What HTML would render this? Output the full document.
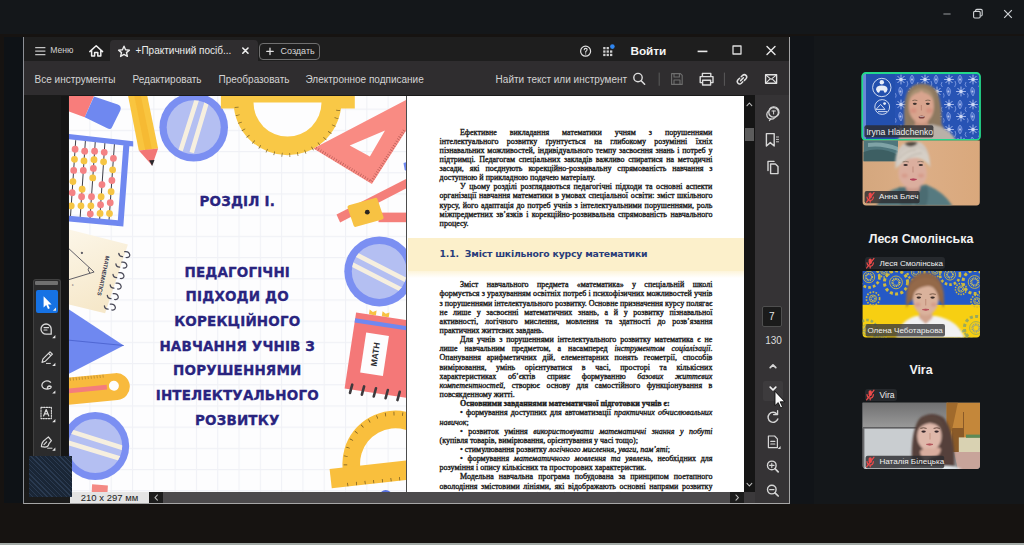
<!DOCTYPE html>
<html lang="uk">
<head>
<meta charset="utf-8">
<title>Screen share</title>
<style>
*{box-sizing:border-box;margin:0;padding:0}
html,body{width:1024px;height:545px;overflow:hidden;background:#161311}
body{position:relative;font-family:"Liberation Sans","DejaVu Sans",sans-serif;color:#e6e6e6}
.a{position:absolute}
#topband{left:0;top:0;width:1024px;height:34px;background:#14171a}
#leftstrip{left:4px;top:37px;width:20px;height:466px;background:#0e1216}
#rightpanel{left:790px;top:36px;width:234px;height:468px;background:#14171a}
#rightgap{left:790px;top:36px;width:24px;height:468px;background:#111418}
#bottomline{left:0;top:543px;width:1024px;height:2px;background:#a3aaa6}
/* acrobat window */
#win{left:23px;top:37px;width:767px;height:467px;background:#1b1b1b;border-left:1px solid #8d9096;border-bottom:1px solid #a6a6a6;border-right:1px solid #a4a4a4;overflow:hidden}
#tabbar{left:0;top:0;width:766px;height:24px;background:#1e1e1e}
#acttab{left:86px;top:3px;width:148px;height:22px;background:#2f2d2f;border-radius:4px 4px 0 0}
#toolbar{left:0;top:24px;width:766px;height:34px;background:#2f2d2f}
#doc{left:0;top:58px;width:733px;height:397px;background:#1a1a1a}
#page1{left:44.5px;top:1px;width:337.5px;height:396px;background:#fdfdfe;overflow:hidden}
#page2{left:384px;top:1px;width:336px;height:396px;background:#fff;overflow:hidden}
#vscroll{left:720px;top:58px;width:11.4px;height:397px;background:#151515}
#rpane{left:731.4px;top:58px;width:34.6px;height:408px;background:#353335}
#hscroll{left:124px;top:455px;width:607.4px;height:11px;background:linear-gradient(90deg,#4c4a4c 0,#4c4a4c 596px,#3b393b 596px)}
#sizelabel{left:46px;top:455px;width:79px;height:11px;background:#e4e4e4;color:#222;font-size:9.5px;line-height:11px;text-align:center;white-space:nowrap}
.ttl{left:0;width:337.5px;text-align:center;font-family:"DejaVu Sans","Liberation Sans",sans-serif;font-weight:bold;font-size:13.5px;line-height:24px;color:#29247f;white-space:nowrap;letter-spacing:0.15px;-webkit-text-stroke:0.3px #29247f}
.txt{left:31.6px;width:272.8px;font-family:"Liberation Serif","DejaVu Serif",serif;font-size:8px;color:#1a1a1a;-webkit-text-stroke:0.35px #1a1a1a}
.txt p{white-space:nowrap;text-align:justify;text-align-last:justify;height:inherit;overflow:visible}
.txt p.i{padding-left:20.4px}
.txt p.l{text-align:left;text-align-last:left}
.ztitle{width:118px;text-align:center;font-weight:bold;font-size:12.4px;line-height:16px;color:#f2f2f2;white-space:nowrap}
.zl{font-size:8.6px;line-height:12px;color:#f0f0f0;white-space:nowrap}
.tb{font-size:10px;color:#d4d4d4;white-space:nowrap;line-height:14px}
</style>
</head>
<body>
<div class="a" id="topband"></div>
<div class="a" id="leftstrip"></div>
<div class="a" id="rightpanel"></div>
<div class="a" id="rightgap"></div>
<div class="a" id="bottomline"></div>

<div class="a" id="win">
  <div class="a" id="tabbar"></div>
  <div class="a" id="acttab"></div>
  <div class="a" id="toolbar"></div>
  <div class="a" id="doc">
    <div class="a" id="page1"><svg class="a" style="left:0;top:0" width="337.5" height="396" viewBox="68.5 96 337.5 396">
<defs>
<pattern id="grid" x="174.1" y="172.2" width="21.3" height="21.2" patternUnits="userSpaceOnUse"><path d="M0.5 0V21.2M0 0.5H21.3" stroke="#f0f1f6" stroke-width="1.2" fill="none"/></pattern>
<clipPath id="m1"><circle cx="193.2" cy="127.3" r="27"/></clipPath>
<clipPath id="m2"><circle cx="378.8" cy="271.4" r="27.5"/></clipPath>
<clipPath id="m3"><circle cx="94.7" cy="446" r="27"/></clipPath>
</defs>
<rect x="68.5" y="96" width="337.5" height="396" fill="#fdfdfe"/>
<rect x="68.5" y="96" width="337.5" height="396" fill="url(#grid)"/>
<!-- eraser -->
<path d="M68.5 96H93.5L84.2 117.2L68.5 111.6Z" fill="#f87d7b"/>
<path d="M93.5 96.4L117.3 104.6Q121.4 106.4 119.8 110.4L111.4 127.4Q109.8 130 106.8 128.2L84.2 117.2Z" fill="#6f88f0"/>
<!-- abacus -->
<g transform="translate(132.7,141) rotate(4)">
<path d="M-57.4 3.2L-57.3 83.1M-47.7 2.5L-47.6 82.5M-37.8 1.8L-37.7 81.8M-28.1 1.1L-28.0 81.1M-18.5 0.4L-18.6 80.4M-67.0 3.8L-66.9 83.8" stroke="#2f2f38" stroke-width="0.9" fill="none"/>
<g fill="#f48284"><circle cx="-57.4" cy="12.3" r="3.4"/><circle cx="-57.3" cy="33.5" r="3.4"/><circle cx="-57.3" cy="55.8" r="3.4"/><circle cx="-47.7" cy="13.6" r="3.4"/><circle cx="-47.7" cy="32.9" r="3.4"/><circle cx="-47.6" cy="59.2" r="3.4"/><circle cx="-37.8" cy="12.9" r="3.4"/><circle cx="-37.8" cy="30.1" r="3.4"/><circle cx="-37.7" cy="58.5" r="3.4"/><circle cx="-37.7" cy="75.7" r="3.4"/><circle cx="-28.1" cy="13.3" r="3.4"/><circle cx="-28.1" cy="45.7" r="3.4"/><circle cx="-28.1" cy="65.9" r="3.4"/><circle cx="-18.5" cy="18.7" r="3.4"/><circle cx="-18.5" cy="40.9" r="3.4"/><circle cx="-18.6" cy="63.2" r="3.4"/><circle cx="-67.0" cy="12.5" r="3.4"/><circle cx="-67.0" cy="33.6" r="3.4"/><circle cx="-67.0" cy="55.9" r="3.4"/></g>
<g fill="#f6c544"><circle cx="-57.3" cy="22.4" r="3.4"/><circle cx="-57.3" cy="44.7" r="3.4"/><circle cx="-57.3" cy="69.0" r="3.4"/><circle cx="-47.7" cy="23.3" r="3.4"/><circle cx="-47.6" cy="51.7" r="3.4"/><circle cx="-47.6" cy="68.3" r="3.4"/><circle cx="-37.8" cy="21.4" r="3.4"/><circle cx="-37.8" cy="39.7" r="3.4"/><circle cx="-37.7" cy="67.6" r="3.4"/><circle cx="-28.1" cy="22.8" r="3.4"/><circle cx="-28.1" cy="57.8" r="3.4"/><circle cx="-28.0" cy="74.6" r="3.4"/><circle cx="-18.5" cy="30.2" r="3.4"/><circle cx="-18.5" cy="52.1" r="3.4"/><circle cx="-18.6" cy="74.0" r="3.4"/><circle cx="-67.0" cy="22.7" r="3.4"/><circle cx="-67.0" cy="44.9" r="3.4"/><circle cx="-66.9" cy="69.2" r="3.4"/></g>
<path d="M-69.1 -2.7L-0.0 0.2L0.4 5.4L-68.7 2.5ZM-9.6 4.9L-3.5 5.3L-3.9 85.9L-9.8 85.5ZM-63.3 78.9L-4.3 80.3L-3.9 86.1L-63.0 84.6Z" fill="#7088f0"/>
</g>
<!-- pencil -->
<path d="M127.6 96H146.8L157.6 148.6L138.3 150.6Z" fill="#f9c53f"/>
<path d="M133.8 96H140.4L151.4 149.2L144.7 149.9Z" fill="#f6ba33"/>
<path d="M138.3 150.6L157.6 148.6L151.6 165.6Z" fill="#f27676"/>
<path d="M148.6 160.2L154 160L151.6 166Z" fill="#2a2a2e"/>
<!-- magnifier 1 -->
<circle cx="193.2" cy="127.3" r="34.3" fill="#7b8ff2"/>
<circle cx="193.2" cy="127.3" r="27" fill="#b4bff2"/>
<g clip-path="url(#m1)" stroke="#f6efdf" stroke-width="4.6"><path d="M197.2 96.8L180.1 150.6M207.3 98.8L191.2 152.6"/></g>
<!-- protractor 1 -->
<path d="M220.4 96H354.3V108.6H340.5A54 54 0 0 1 233.5 108.6H220.4Z" fill="#f9c846"/>
<path d="M253 102.6H321A34 34 0 0 1 253 102.6Z" fill="#fdfdfe"/>
<path d="M236 104A51 51 0 0 0 338 104" fill="none" stroke="#7d6426" stroke-width="4" stroke-dasharray="0.7 7.2" stroke-dashoffset="-3"/>
<!-- triangle ruler -->
<path d="M312.9 148.5L435 84.7L371.4 183.9ZM349.2 145.5L384.5 130.4L369.4 156.6Z" fill="#f98b83" fill-rule="evenodd"/>
<path d="M315.5 148L370.6 181.3" fill="none" stroke="#b05752" stroke-width="3" stroke-dasharray="0.6 2"/>
<path d="M371 181.2L404.5 129" fill="none" stroke="#b05752" stroke-width="3" stroke-dasharray="0.6 2"/>
<!-- compass -->
<path d="M336 214.6L406 178.7V188.2L339.6 222.4Z" fill="#f47f7a"/>
<rect x="378" y="212.6" width="28" height="9.6" fill="#f47f7a"/>
<path d="M348.4 205.2L374.5 198Q376.4 197.4 377 199.3L383 217.1Q383.6 219 381.7 219.6L355.6 226.8Q353.7 227.4 353.1 225.5L347.1 207.7Q346.5 205.8 348.4 205.2Z" fill="#f7c243"/>
<circle cx="366.8" cy="212.2" r="2.4" fill="#2b2620"/>
<path d="M403 163L406 162V171L404.2 170Z" fill="#6f88f0"/>
<!-- magnifier 2 -->
<circle cx="378.8" cy="271.4" r="35" fill="#7b8ff2"/>
<circle cx="378.8" cy="271.4" r="27.5" fill="#b4bff2"/>
<g clip-path="url(#m2)" stroke="#f6efdf" stroke-width="4.6"><path d="M350 251.6L408 281.4M345 261.1L404 291.3"/></g>
<!-- notebook MATH -->
<g transform="translate(355.6,312.4) rotate(8.6)">
<path d="M13 0V-5L16.5 -3L20 -5V0ZM26 0V-5L29.5 -3L33 -5V0Z" fill="#f7c243"/>
<rect x="0" y="0" width="70" height="77" fill="#f47878"/>
<rect x="0" y="6" width="70" height="4.2" fill="#6f88f0"/>
<rect x="13" y="18.4" width="23" height="40.4" fill="#fdfdfe"/>
<text transform="translate(28.2,38.6) rotate(-90)" text-anchor="middle" font-family="Liberation Sans, sans-serif" font-weight="bold" font-size="8.6" fill="#2d2d33">MATH</text>
<g stroke="#3d3a3d" stroke-width="2.6" stroke-linecap="round"><path d="M7 72L6 80.5M19 72L18 80.5M31 72L30 80.5M43 72L42 80.5M55 72L54 80.5"/></g>
</g>
<!-- protractor 2 -->
<g transform="translate(394.9,463.6) rotate(-6.4)">
<path d="M-53 0A53 53 0 0 1 53 0H35.3A35.3 35.3 0 0 0 -35.3 0Z" fill="#f9bf3d"/>
<rect x="-66" y="-2" width="130" height="19.5" fill="#f9bf3d"/>
<path d="M-50 0A50 50 0 0 1 50 0" fill="none" stroke="#6e5520" stroke-width="3.6" stroke-dasharray="0.7 8" stroke-dashoffset="-4"/>
<path d="M-50 15.5H60" fill="none" stroke="#6e5520" stroke-width="3.4" stroke-dasharray="0.7 8"/>
</g>
<path d="M380.5 492Q385 488 390 492Z" fill="#5872e0"/>
<!-- notepad -->
<linearGradient id="npg" x1="0" y1="0" x2="0.3" y2="1"><stop offset="0" stop-color="#fcf6e8"/><stop offset="1" stop-color="#f6e8ca"/></linearGradient>
<path d="M68.5 229.4L127.4 244.6L104.6 313.2L68.5 304.6Z" fill="url(#npg)"/>
<g fill="none" stroke="#4a4a58" stroke-width="1.25" stroke-linecap="round"><path d="M118.3 253.4Q118.5 256.4 122.0 256.7M124.2 251.6Q128.6 251.0 129.3 255.0Q129.1 257.8 125.7 257.5"/><path d="M115.4 263.9Q115.6 266.9 119.1 267.2M121.3 262.1Q125.7 261.5 126.4 265.5Q126.2 268.3 122.8 268.0"/><path d="M112.5 274.4Q112.7 277.4 116.2 277.7M118.4 272.6Q122.8 272.0 123.5 276.0Q123.3 278.8 119.9 278.5"/><path d="M109.7 284.9Q109.9 287.9 113.4 288.2M115.6 283.1Q120.0 282.5 120.7 286.5Q120.5 289.3 117.1 289.0"/><path d="M106.8 295.4Q107.0 298.4 110.5 298.7M112.7 293.6Q117.1 293.0 117.8 297.0Q117.6 299.8 114.2 299.5"/><path d="M103.9 305.9Q104.1 308.9 107.6 309.2M109.8 304.1Q114.2 303.5 114.9 307.5Q114.7 310.3 111.3 310.0"/></g>
<g fill="none" stroke="#3b3b4a" stroke-width="0.8"><path d="M68.5 248.8L93.6 272L68.5 279.6M88.6 267.4L87.6 269.8L89.4 273.2"/><circle cx="81.4" cy="252.9" r="0.7" fill="#3b3b4a"/></g>
<text x="71.4" y="285.6" font-family="Liberation Sans, sans-serif" font-size="3.6" fill="#3b3b4a">c</text>
<text transform="translate(105.2,255.6) rotate(102)" font-family="Liberation Sans, sans-serif" font-size="5.6" font-weight="bold" fill="#34344a" letter-spacing="0">MATHEMATICS</text>
<!-- blue triangle -->
<path d="M68.5 309.4L123.2 345.5L68.5 373.8Z" fill="#6f88f0"/>
<path d="M68.5 340.2L123.2 345.5" stroke="#4c63cf" stroke-width="0.9" fill="none"/>
<!-- ruler -->
<g transform="translate(68.5,391) rotate(-5.4)">
<rect x="-30" y="-13.4" width="91" height="27" rx="13.5" fill="#f8ba3d"/>
<rect x="-30" y="-2.6" width="68" height="4.8" fill="#f47c7c"/>
<circle cx="45.2" cy="-1" r="5" fill="#fdfdfe"/>
<path d="M2 -11.6H36" stroke="#a2792a" stroke-width="3" stroke-dasharray="0.6 2.4" fill="none"/>
</g>
<!-- magnifier 3 -->
<circle cx="94.7" cy="446" r="34" fill="#7b8ff2"/>
<circle cx="94.7" cy="446" r="27" fill="#b4bff2"/>
<g clip-path="url(#m3)" stroke="#f6efdf" stroke-width="4.6"><path d="M62 428.9L125 448.8M61 440.7L121 459"/></g>
<path d="M91.6 484.2L107.4 485.6L107 492H91.2Z" fill="#f48a84"/>
</svg>
<div class="a ttl" style="top:93px">РОЗДІЛ І.</div>
<div class="a ttl" style="top:163.5px">ПЕДАГОГІЧНІ</div>
<div class="a ttl" style="top:188.2px">ПІДХОДИ ДО</div>
<div class="a ttl" style="top:212.9px">КОРЕКЦІЙНОГО</div>
<div class="a ttl" style="top:237.6px">НАВЧАННЯ УЧНІВ З</div>
<div class="a ttl" style="top:262.3px">ПОРУШЕННЯМИ</div>
<div class="a ttl" style="top:287.0px">ІНТЕЛЕКТУАЛЬНОГО</div>
<div class="a ttl" style="top:311.7px">РОЗВИТКУ</div>
</div>
    <div class="a" style="left:382px;top:1px;width:1.2px;height:396px;background:#4c4c4c"></div><div class="a" style="left:383.2px;top:1px;width:1px;height:396px;background:#fff"></div>
    <div class="a" id="page2"><div class="a" style="left:0;top:142.4px;width:336px;height:32.2px;background:#fcf0cb"></div>
<div class="a" style="left:0;top:174.6px;width:336px;height:7px;background:linear-gradient(#fdf4da,#ffffff)"></div>
<div class="a" style="left:31.6px;top:152.4px;font-family:'DejaVu Sans','Liberation Sans',sans-serif;font-weight:bold;font-size:9.3px;line-height:12px;color:#283c7a;white-space:pre;letter-spacing:-0.2px">1.1.  Зміст шкільного курсу математики</div>
<div class="a txt" style="top:31.5px;line-height:9.14px">
<p class="i">Ефективне викладання математики учням з порушеннями</p>
<p>інтелектуального розвитку ґрунтується на глибокому розумінні їхніх</p>
<p>пізнавальних можливостей, індивідуального темпу засвоєння знань і потреб у</p>
<p>підтримці. Педагогам спеціальних закладів важливо спиратися на методичні</p>
<p>засади, які поєднують корекційно-розвивальну спрямованість навчання з</p>
<p class="l">доступною й прикладною подачею матеріалу.</p>
<p class="i">У цьому розділі розглядаються педагогічні підходи та основні аспекти</p>
<p>організації навчання математики в умовах спеціальної освіти: зміст шкільного</p>
<p>курсу, його адаптація до потреб учнів з інтелектуальними порушеннями, роль</p>
<p>міжпредметних зв’язків і корекційно-розвивальна спрямованість навчального</p>
<p class="l">процесу.</p>
</div>
<div class="a txt" style="top:184.2px;line-height:9.15px">
<p class="i">Зміст навчального предмета «математика» у спеціальній школі</p>
<p>формується з урахуванням освітніх потреб і психофізичних можливостей учнів</p>
<p>з порушеннями інтелектуального розвитку. Основне призначення курсу полягає</p>
<p>не лише у засвоєнні математичних знань, а й у розвитку пізнавальної</p>
<p>активності, логічного мислення, мовлення та здатності до розв’язання</p>
<p class="l">практичних життєвих завдань.</p>
<p class="i">Для учнів з порушеннями інтелектуального розвитку математика є не</p>
<p>лише навчальним предметом, а насамперед <i>інструментом соціалізації</i>.</p>
<p>Опанування арифметичних дій, елементарних понять геометрії, способів</p>
<p>вимірювання, умінь орієнтуватися в часі, просторі та кількісних</p>
<p>характеристиках об’єктів сприяє формуванню <i>базових життєвих</i></p>
<p><i>компетентностей</i>, створює основу для самостійного функціонування в</p>
<p class="l">повсякденному житті.</p>
<p class="l" style="padding-left:20.4px"><b>Основними завданнями математичної підготовки учнів є:</b></p>
<p class="i">• формування доступних для автоматизації <i>практичних обчислювальних</i></p>
<p class="l"><i>навичок</i>;</p>
<p class="i">• розвиток уміння <i>використовувати математичні знання у побуті</i></p>
<p class="l">(купівля товарів, вимірювання, орієнтування у часі тощо);</p>
<p class="l" style="padding-left:20.4px">• стимулювання розвитку <i>логічного мислення, уваги, пам’яті</i>;</p>
<p class="i">• формування <i>математичного мовлення та уявлень</i>, необхідних для</p>
<p class="l">розуміння і опису кількісних та просторових характеристик.</p>
<p class="i">Модельна навчальна програма побудована за принципом поетапного</p>
<p>оволодіння змістовими лініями, які відображають основні напрями розвитку</p>
<p>математичних знань та вмінь учнів: числа та дії з ними, величини та їх</p>
</div>
</div>
  </div>
  <div class="a" id="vscroll"></div>
  <div class="a" id="rpane"></div>
  <div class="a" id="hscroll"></div>
  <div class="a" id="sizelabel">210 x 297 мм</div>
  <div class="a tb" style="left:26.3px;top:8px;font-size:8.6px;line-height:11px;color:#d2d2d2">Меню</div>
<div class="a tb" style="left:111.6px;top:6.6px;color:#ececec">+Практичний посіб...</div>
<div class="a" style="left:235px;top:5.7px;width:60.6px;height:17px;border:1px solid #707070;border-radius:4px"></div>
<div class="a tb" style="left:256.5px;top:8.2px;font-size:9px;line-height:12px;color:#d8d8d8">Создать</div>
<div class="a tb" style="left:606.6px;top:6.5px;font-size:11.8px;font-weight:bold;color:#f4f4f4;letter-spacing:-0.1px">Войти</div>
<div class="a tb" style="left:10.6px;top:35.5px">Все инструменты</div>
<div class="a tb" style="left:108.5px;top:35.5px">Редактировать</div>
<div class="a tb" style="left:194.5px;top:35.5px">Преобразовать</div>
<div class="a tb" style="left:281.5px;top:35.5px">Электронное подписание</div>
<div class="a tb" style="left:471.6px;top:35.5px">Найти текст или инструмент</div>
<div class="a" style="left:721px;top:90.6px;width:9.4px;height:13.8px;background:#5c5c5c"></div>
<div class="a" style="left:125px;top:455px;width:14.4px;height:11px;background:#1c1c1c"></div>
<div class="a" style="left:706px;top:455px;width:14px;height:11px;background:#1c1c1c"></div>
<div class="a" style="left:737.6px;top:269px;width:20.4px;height:21.4px;background:#1b1b1b;border:1px solid #4f4f4f;border-radius:2px;color:#e8e8e8;font-size:10px;line-height:19px;text-align:center">7</div>
<div class="a tb" style="left:734px;top:296.6px;width:31px;text-align:center;font-size:10px;color:#dcdcdc">130</div>
<div class="a" style="left:739px;top:343.6px;width:20px;height:20.6px;background:#3d3b3d;border-radius:2px"></div>
<svg class="a" style="left:0;top:0" width="766" height="466" viewBox="24 37 766 466" fill="none" stroke="#d6d6d6" stroke-width="1.3" stroke-linecap="round" stroke-linejoin="round">
<!-- hamburger -->
<path d="M35.2 47.6H45.4M35.2 51.1H45.4M35.2 54.6H45.4" stroke="#c4c4c4" stroke-width="1.4" stroke-linecap="butt"/>
<!-- home -->
<path d="M89.8 51.6L96.2 45.8L102.6 51.6M91.6 50.6V56H94.6V52.6H97.8V56H100.8V50.6" stroke="#f0f0f0" stroke-width="1.5"/>
<!-- star -->
<path d="M124 46.2L125.55 49.75L129.4 50.1L126.5 52.65L127.4 56.4L124 54.4L120.6 56.4L121.5 52.65L118.6 50.1L122.45 49.75Z" stroke="#ececec" stroke-width="1.4"/>
<!-- tab close -->
<path d="M242.8 48L248 53.2M248 48L242.8 53.2" stroke="#f0f0f0" stroke-width="1.6"/>
<!-- plus -->
<path d="M266.8 51.4H273.2M270 48.2V54.6" stroke="#e0e0e0" stroke-width="1.3"/>
<!-- help -->
<circle cx="585.6" cy="51.2" r="5" stroke="#e0e0e0" stroke-width="1.2"/>
<path d="M584.2 49.8Q584.2 48.4 585.7 48.4Q587.2 48.4 587.1 49.8Q587 50.8 585.7 51.4V52.3M585.7 53.9V54" stroke="#e0e0e0" stroke-width="1.1"/>
<!-- apps grid -->
<g fill="#cfcfcf" stroke="none"><rect x="603.2" y="47" width="2.3" height="2.3"/><rect x="606.6" y="47" width="2.3" height="2.3"/><rect x="603.2" y="50.4" width="2.3" height="2.3"/><rect x="606.6" y="50.4" width="2.3" height="2.3"/><rect x="610" y="50.4" width="2.3" height="2.3"/><rect x="603.2" y="53.8" width="2.3" height="2.3"/><rect x="606.6" y="53.8" width="2.3" height="2.3"/><rect x="610" y="53.8" width="2.3" height="2.3"/></g>
<circle cx="612.4" cy="46.6" r="2.3" fill="#2f86f0" stroke="none"/>
<!-- window controls -->
<path d="M697.6 51.4H707.4" stroke="#eaeaea" stroke-width="1.6" stroke-linecap="butt"/>
<rect x="733" y="46" width="8" height="8" stroke="#dedede" stroke-width="1.3"/>
<path d="M767 46.6L775 54.6M775 46.6L767 54.6" stroke="#eaeaea" stroke-width="1.4"/>
<!-- search -->
<circle cx="638" cy="77.6" r="4.2" stroke="#dcdcdc" stroke-width="1.4"/><path d="M641.2 80.8L644.6 84.2" stroke="#dcdcdc" stroke-width="1.6"/>
<path d="M659.2 73V85.4M724.4 73V85.4" stroke="#5a5a5a" stroke-width="1"/>
<!-- save (dim) -->
<path d="M671.6 73.6H680.4L682.2 75.4V84.4H671.6ZM674 73.8V77H679.4V73.8M674 84.2V80H680V84.2" stroke="#6e6e6e" stroke-width="1.1"/>
<!-- print -->
<path d="M702.4 76.4V73.4H710.8V76.4M702.4 82.6H700.2V76.6H713V82.6H710.8M702.6 80.2H710.6V85H702.6Z" stroke="#dcdcdc" stroke-width="1.4"/>
<!-- link -->
<path d="M740.6 80.6L743.4 77.8M739.6 78.2L738 79.8Q736.4 81.6 738 83.2Q739.6 84.8 741.4 83.2L742.8 81.8M741.2 76.8L742.6 75.4Q744.4 73.8 746 75.4Q747.6 77 746 78.8L744.4 80.4" stroke="#e2e2e2" stroke-width="1.5"/>
<!-- mail -->
<rect x="765.6" y="74.8" width="11" height="8.4" stroke="#e2e2e2" stroke-width="1.4"/><path d="M766 75.2L771.1 79.4L776.2 75.2M766 82.8L769.6 79.4M776.2 82.8L772.6 79.4" stroke="#e2e2e2" stroke-width="1.1"/>
<!-- vscroll arrows -->
<path d="M747 105.6L749.4 103L751.8 105.6" stroke="#bdbdbd" stroke-width="1.1"/>
<path d="M747 483.4L749.4 486L751.8 483.4" stroke="#bdbdbd" stroke-width="1.1"/>
<path d="M157.4 495L155 497.6L157.4 500.2M736 495L738.4 497.6L736 500.2" stroke="#bdbdbd" stroke-width="1.1"/>
<!-- right pane icons -->
<circle cx="771.4" cy="114.6" r="4.6"/><path d="M776.4 116.6A5.2 5.2 0 1 0 769.4 109.4M770.8 118.8L769.4 120.6" stroke-width="1.2"/><circle cx="773.6" cy="112.4" r="4.8" fill="#353335"/><path d="M772 111H775.4M773.6 111V114" stroke-width="1"/>
<path d="M766.4 133.6H774.2V146L770.3 142.6L766.4 146Z" stroke-width="1.4"/><path d="M776.4 137H778.6M776.4 139.4H778.6M776.4 141.8H778.6" stroke-width="0.9"/>
<path d="M768 170.6V161.4H774M770.6 164H775.4L778 166.6V173.6H770.6Z" stroke-width="1.4"/>
<!-- up/down chevrons -->
<path d="M770.2 367.6L773 364.8L775.8 367.6" stroke-width="1.7"/>
<path d="M770.2 387.2L773 390L775.8 387.2" stroke-width="1.7" stroke="#f2f2f2"/>
<!-- rotate -->
<path d="M777 414.2A5 5 0 1 0 777.8 419" stroke-width="1.4"/><path d="M777.6 410.6V414.6H773.6" stroke-width="1.3"/>
<!-- page fit -->
<path d="M768.4 436H774.6L777.4 438.8V447.6H768.4ZM770.8 441.4H774.8M770.8 444H774.8" stroke-width="1.2"/><path d="M780.6 446V449H777.6Z" fill="#d6d6d6" stroke="none"/>
<!-- zoom in / out -->
<circle cx="771.8" cy="465.4" r="4.3" stroke-width="1.4"/><path d="M775 468.6L778.2 471.8" stroke-width="1.7"/><path d="M769.6 465.4H774M771.8 463.2V467.6" stroke-width="1.1"/>
<circle cx="771.8" cy="489.6" r="4.3" stroke-width="1.4"/><path d="M775 492.8L778.2 496" stroke-width="1.7"/><path d="M769.6 489.6H774" stroke-width="1.1"/>
<!-- mouse cursor -->
<path d="M775 391.6V405.6L778.2 402.6L780.6 408L782.6 407.1L780.2 401.8H784.6Z" fill="#fafafa" stroke="#111" stroke-width="0.9" stroke-linejoin="miter"/>
</svg>

</div>
<div class="a" style="left:60.9px;top:96px;width:7.6px;height:396px;background:#151515"></div>
<div class="a" style="left:33px;top:279.4px;width:28px;height:178px;background:#2b2b2c;border:1px solid #414141;border-bottom:none;border-radius:3px 3px 0 0"></div>
<div class="a" style="left:35.2px;top:281.4px;width:23.2px;height:3.4px;background:#707070;border-radius:1px"></div>
<div class="a" style="left:35.6px;top:290px;width:22.8px;height:22.8px;background:#1672e4;border-radius:2px"></div>
<div class="a" style="left:29px;top:455.8px;width:42.6px;height:41.6px;background:repeating-linear-gradient(45deg,#1a2636 0,#1a2636 2.4px,#2a3a50 2.4px,#2a3a50 3.4px)"></div>
<svg class="a" style="left:26px;top:275px" width="50" height="190" viewBox="26 275 50 190" fill="none" stroke="#dadada" stroke-width="1.3" stroke-linecap="round" stroke-linejoin="round">
<path d="M43.6 296.2V307.4L46.2 305L48 309L49.8 308.2L48 304.4H51.6Z" fill="#fff" stroke="none"/>
<g fill="#e8e8e8" stroke="none"><path d="M56 307.6V310.8H52.8Z"/><path d="M55.4 335V338.2H52.2Z"/><path d="M55.4 362.8V366H52.2Z"/><path d="M55.4 390.4V393.6H52.2Z"/><path d="M55.4 419V422.2H52.2Z"/><path d="M55.4 447.6V450.8H52.2Z"/></g>
<path d="M51.2 329A5.1 5.1 0 1 0 46.2 334.2H51.2Z"/><path d="M44 327.6H48.6M44 330H47" stroke-width="1.1"/>
<path d="M42 362.4L43 358.8L50 351.8L52.4 354.2L45.4 361.2ZM48.6 353.4L50.8 355.6" stroke-width="1.2"/><path d="M46.4 363.4H50.4" stroke-width="1"/>
<path d="M50.6 382.2Q46.6 379.6 43.2 382.4Q40.4 385.6 43.6 388.2Q47 390 50.4 388.2Q52.4 386.4 49.6 386Q47.2 386.2 47.4 388.8" stroke-width="1.3"/>
<rect x="41" y="407.4" width="10.4" height="11.2" stroke-dasharray="1.4 1.2" stroke-width="1.1"/><path d="M43.6 416L46.2 409.6L48.8 416M44.6 413.8H47.8" stroke-width="1.2"/>
<path d="M41.4 446.6Q41.4 442 45.4 439.4L48.4 437L51.4 440.6L49 443.6Q48.4 447 44.8 447.2ZM44 444.6L46.6 441.8" stroke-width="1.2"/><path d="M47.6 448.2H52" stroke-width="1"/>
</svg>

<svg class="a" style="left:936px;top:4px" width="84" height="22" viewBox="936 4 84 22" fill="none" stroke="#d0d3d6" stroke-width="1.1">
<path d="M943.4 14H950.6" stroke="#8c9094"/><rect x="973.6" y="11.4" width="6.6" height="6.6" rx="1.2"/><path d="M975.6 11.2V10.6Q975.6 9.4 976.8 9.4H981Q982.2 9.4 982.2 10.6V14.8Q982.2 16 981 16H980.4"/><path d="M1004.2 10.2L1011.8 17.8M1011.8 10.2L1004.2 17.8" stroke-width="1.2"/>
</svg>
<div class="a ztitle" style="left:862px;top:230.5px">Леся Смолінська</div>
<div class="a ztitle" style="left:862px;top:362px">Vira</div>
<!-- video 1 -->
<svg class="a" style="left:861px;top:72px" width="120" height="69" viewBox="861 72 120 69">
<defs>
<clipPath id="v1c"><rect x="862.6" y="73.4" width="117" height="66" rx="3"/></clipPath>
<pattern id="flor" x="895" y="73" width="24" height="25" patternUnits="userSpaceOnUse">
<g stroke="#a3b6ea" stroke-width="1" fill="none"><path d="M6 1.6V11.4M1.1 6.5H10.9M2.5 3L9.5 10M9.5 3L2.5 10"/><path d="M18 13.6V23.4M13.1 18.5H22.9M14.5 15L21.5 22M21.5 15L14.5 22"/></g>
<g stroke="#7c97de" stroke-width="0.9" fill="#4a6fc8"><path d="M17 2Q21 6 17 11Q13 6 17 2ZM5 14Q9.6 17 6 23Q2 18 5 14Z"/><path d="M12 8Q14 11 11.6 14M23 9Q21 12 23.4 14M0 20Q2 22 0.6 24.6" fill="none"/></g>
<circle cx="6" cy="6.5" r="1.7" fill="#cfdaf6"/><circle cx="18" cy="18.5" r="1.7" fill="#cfdaf6"/><circle cx="17" cy="6.6" r="1" fill="#b6c6f0"/><circle cx="5.4" cy="18.6" r="1" fill="#b6c6f0"/>
</pattern>
<filter id="b0"><feGaussianBlur stdDeviation="0.35"/></filter><filter id="b1" x="-20%" y="-20%" width="140%" height="140%"><feGaussianBlur stdDeviation="0.9"/></filter>
</defs>
<g clip-path="url(#v1c)">
<rect x="862" y="73" width="119" height="67" fill="#2753b4"/>
<rect x="895" y="73" width="86" height="67" fill="url(#flor)" filter="url(#b0)"/>
<rect x="862" y="73" width="4" height="67" fill="#6b88d8"/>
<rect x="866" y="73" width="29" height="67" fill="#2350ae"/>
<g stroke="#dfe6f6" stroke-width="0.9" fill="none"><circle cx="881.8" cy="87.5" r="9.2"/><circle cx="882.2" cy="107" r="7.4"/><path d="M876 109.4L880.6 104.4L885 109.4ZM878 111.6H887"/></g>
<g fill="#e8edf8"><circle cx="881.8" cy="82.2" r="2.2"/><path d="M876 89.6Q876 85.6 881.8 85.6Q887.6 85.6 887.6 89.6Q886.4 93.6 884.4 92.6L883.4 90.6H880.2L879.2 92.6Q877.2 93.6 876 89.6Z"/><circle cx="884.6" cy="103.6" r="1.4"/></g>
<g filter="url(#b1)">
<path d="M901 140Q902 128 904.4 124Q903 100 908 91Q913 83.6 921.6 83.6Q931 83.6 936.6 91Q942 101 941.6 124Q946 130 948 140Z" fill="#8e7960"/>
<path d="M897.8 141Q901 129 912 126.4L933 124.6Q950 128 956.6 141Z" fill="#b9b1a8"/>
<path d="M915 118H928V127Q921.6 131 915 127Z" fill="#c6947e"/>
<ellipse cx="921.3" cy="106.2" rx="12.6" ry="17.2" fill="#d8a48e"/>
<path d="M908.4 103Q908.6 88.6 921.4 88Q934.2 88.6 934.4 103Q931 93.6 923.6 92.6L921.4 90.6L919.2 92.6Q911.6 93.6 908.4 103Z" fill="#a89072"/>
<ellipse cx="913.4" cy="110.6" rx="3.2" ry="2.6" fill="#d48a7a" fill-opacity="0.7"/><ellipse cx="929.2" cy="110.6" rx="3.2" ry="2.6" fill="#d48a7a" fill-opacity="0.7"/>
</g>
<g filter="url(#b0)">
<path d="M912.4 100.6Q914.8 99.6 917.4 100.6M925.4 100.6Q928 99.6 930.4 100.6" stroke="#7a6250" stroke-width="0.9" fill="none"/>
<ellipse cx="914.8" cy="103.8" rx="2" ry="1.1" fill="#3e302e"/><ellipse cx="927.8" cy="103.8" rx="2" ry="1.1" fill="#3e302e"/>
<path d="M921.4 105V110.4" stroke="#c08a76" stroke-width="1.2"/>
<ellipse cx="921.6" cy="117" rx="3" ry="1.5" fill="#7c4242"/><path d="M919.4 116.4H923.8" stroke="#e8dcd4" stroke-width="0.7"/>
</g>
<rect x="864.4" y="125.2" width="69" height="12.4" rx="2" fill="#2c2c30" fill-opacity="0.82"/>
</g>
<rect x="862.2" y="73" width="117.8" height="66.8" rx="3.6" fill="none" stroke="#23d88b" stroke-width="1.8"/>
</svg>
<div class="a zl" style="left:866.2px;top:125.6px">Iryna Hladchenko</div>
<!-- video 2 -->
<svg class="a" style="left:862px;top:140px" width="119" height="66" viewBox="862 140 119 66">
<defs><clipPath id="v2c"><path d="M862.6 140.4H979.8V202Q979.8 205.4 976.4 205.4H866Q862.6 205.4 862.6 202Z"/></clipPath>
<linearGradient id="wall2" x1="0" y1="0" x2="1" y2="0"><stop offset="0" stop-color="#d4a77e"/><stop offset="0.5" stop-color="#dcae86"/><stop offset="1" stop-color="#d9a87c"/></linearGradient></defs>
<g clip-path="url(#v2c)">
<rect x="862" y="140" width="119" height="66" fill="url(#wall2)"/>
<rect x="863.6" y="140" width="34.4" height="21.2" fill="#4f767c"/><path d="M863.6 152Q880 146 898 155V161.2H863.6Z" fill="#3d5f63"/><path d="M868 143Q884 141 898 147V151Q882 145 868 147Z" fill="#7fa3a6"/>
<g filter="url(#b1)">
<path d="M876 206Q884 191 899 187.4L926 184.6Q944 192 952.6 206Z" fill="#577a80"/>
<path d="M895.4 170Q894 150 903.4 144Q911.8 139.8 921.6 143Q930 149 930.4 168Q926 158 912.6 157Q899 158 895.4 170Z" fill="#cfc8c0"/>
<path d="M904.6 143.4Q911 140.4 917.6 142.6Q916 146.6 910.6 146.4Q906 146.4 904.6 143.4Z" fill="#50463e"/>
<path d="M906 184H920V192L913 197L906 192Z" fill="#c9998a"/>
<ellipse cx="912.6" cy="173.2" rx="14.2" ry="15.4" fill="#dbae9e"/>
<path d="M897 168Q898 152 908 149Q918 146 926.6 153Q929.6 158 929.6 166Q925 158.6 917 158Q906 156.6 897 168Z" fill="#d6cfc6"/>
<path d="M899 159Q906 150 916 149.6M903 163Q910 154 922 153" stroke="#b4aca2" stroke-width="0.8" fill="none"/>
<ellipse cx="904.6" cy="175.6" rx="3" ry="2.2" fill="#d4907e" fill-opacity="0.6"/><ellipse cx="921" cy="175.6" rx="3" ry="2.2" fill="#d4907e" fill-opacity="0.6"/>
<path d="M899 187Q896.6 196 901 206H912L913 197L905 188.6ZM927 186Q930 196 926 206H915L914 197L921 188Z" fill="#4c6c72"/>
</g>
<g filter="url(#b0)">
<path d="M902.6 162Q905.6 160.8 908.8 162M917.4 162Q920.6 160.8 923.6 162" stroke="#8a7464" stroke-width="0.9" fill="none"/>
<ellipse cx="905.6" cy="165" rx="2.2" ry="1.1" fill="#3c302e"/><ellipse cx="920.8" cy="165" rx="2.2" ry="1.1" fill="#3c302e"/>
<path d="M913 166.6V172.6" stroke="#c49080" stroke-width="1.2"/>
<path d="M910 179.4Q913.2 181.2 916.6 179.4Q913.2 178.2 910 179.4Z" fill="#b24058" stroke="#b24058" stroke-width="0.8"/>
</g>
<rect x="864.6" y="191" width="55" height="12.2" rx="2" fill="#2c2c30" fill-opacity="0.82"/>
</g>
</svg>
<div class="a zl" style="font-size:8.1px;left:879px;top:191.3px">Анна Блеч</div>
<!-- label 3 -->
<div class="a" style="left:864.6px;top:257.2px;width:80.4px;height:12px;background:#26292d;border-radius:3px"></div>
<div class="a zl" style="font-size:8.1px;left:879.4px;top:258px">Леся Смолінська</div>
<!-- video 3 -->
<svg class="a" style="left:862px;top:270px" width="119" height="68" viewBox="862 270 119 68">
<defs><clipPath id="v3c"><path d="M862.6 271H980V334Q980 337.4 976.6 337.4H866Q862.6 337.4 862.6 334Z"/></clipPath></defs>
<g clip-path="url(#v3c)">
<rect x="862" y="270" width="119" height="35" fill="#2559c6"/>
<rect x="862" y="304.8" width="119" height="34" fill="#f7cf12"/>
<g fill="none"><circle cx="896" cy="282.4" r="11.6" stroke="#cdb93e" stroke-width="3.0" stroke-dasharray="3.02 2.32"/><circle cx="896" cy="282.4" r="6.4" stroke="#cdb93e" stroke-width="0.9"/><circle cx="896" cy="282.4" r="3.5" stroke="#e2cc48" stroke-width="2.3" stroke-dasharray="0.8 0.7"/><circle cx="869" cy="277" r="10.4" stroke="#cdb93e" stroke-width="2.7" stroke-dasharray="2.70 2.08"/><circle cx="869" cy="277" r="5.7" stroke="#cdb93e" stroke-width="0.9"/><circle cx="869" cy="277" r="3.1" stroke="#e2cc48" stroke-width="2.1" stroke-dasharray="0.8 0.7"/><circle cx="873" cy="298.6" r="6.6" stroke="#cdb93e" stroke-width="1.7" stroke-dasharray="1.72 1.32"/><circle cx="873" cy="298.6" r="3.6" stroke="#cdb93e" stroke-width="0.9"/><circle cx="873" cy="298.6" r="2.0" stroke="#e2cc48" stroke-width="1.3" stroke-dasharray="0.8 0.7"/><circle cx="916" cy="272" r="8.6" stroke="#cdb93e" stroke-width="2.2" stroke-dasharray="2.24 1.72"/><circle cx="916" cy="272" r="4.7" stroke="#cdb93e" stroke-width="0.9"/><circle cx="916" cy="272" r="2.6" stroke="#e2cc48" stroke-width="1.7" stroke-dasharray="0.8 0.7"/><circle cx="884" cy="271" r="6" stroke="#cdb93e" stroke-width="1.6" stroke-dasharray="1.56 1.20"/><circle cx="884" cy="271" r="3.3" stroke="#cdb93e" stroke-width="0.9"/><circle cx="884" cy="271" r="1.8" stroke="#e2cc48" stroke-width="1.2" stroke-dasharray="0.8 0.7"/><circle cx="950" cy="274.6" r="10" stroke="#cdb93e" stroke-width="2.6" stroke-dasharray="2.60 2.00"/><circle cx="950" cy="274.6" r="5.5" stroke="#cdb93e" stroke-width="0.9"/><circle cx="950" cy="274.6" r="3.0" stroke="#e2cc48" stroke-width="2.0" stroke-dasharray="0.8 0.7"/><circle cx="974.6" cy="282" r="11.6" stroke="#cdb93e" stroke-width="3.0" stroke-dasharray="3.02 2.32"/><circle cx="974.6" cy="282" r="6.4" stroke="#cdb93e" stroke-width="0.9"/><circle cx="974.6" cy="282" r="3.5" stroke="#e2cc48" stroke-width="2.3" stroke-dasharray="0.8 0.7"/><circle cx="977" cy="301" r="6" stroke="#cdb93e" stroke-width="1.6" stroke-dasharray="1.56 1.20"/><circle cx="977" cy="301" r="3.3" stroke="#cdb93e" stroke-width="0.9"/><circle cx="977" cy="301" r="1.8" stroke="#e2cc48" stroke-width="1.2" stroke-dasharray="0.8 0.7"/><circle cx="961" cy="289" r="5.6" stroke="#cdb93e" stroke-width="1.5" stroke-dasharray="1.46 1.12"/><circle cx="961" cy="289" r="3.1" stroke="#cdb93e" stroke-width="0.9"/><circle cx="961" cy="289" r="1.7" stroke="#e2cc48" stroke-width="1.1" stroke-dasharray="0.8 0.7"/><circle cx="935" cy="271" r="6" stroke="#cdb93e" stroke-width="1.6" stroke-dasharray="1.56 1.20"/><circle cx="935" cy="271" r="3.3" stroke="#cdb93e" stroke-width="0.9"/><circle cx="935" cy="271" r="1.8" stroke="#e2cc48" stroke-width="1.2" stroke-dasharray="0.8 0.7"/></g><g fill="none"><circle cx="867" cy="330" r="10" stroke="#9aa95c" stroke-width="2.6" stroke-dasharray="2.60 2.00"/><circle cx="867" cy="330" r="5.5" stroke="#9aa95c" stroke-width="0.9"/><circle cx="867" cy="330" r="3.0" stroke="#7f98a0" stroke-width="2.0" stroke-dasharray="0.8 0.7"/><circle cx="976" cy="328" r="11.6" stroke="#9aa95c" stroke-width="3.0" stroke-dasharray="3.02 2.32"/><circle cx="976" cy="328" r="6.4" stroke="#9aa95c" stroke-width="0.9"/><circle cx="976" cy="328" r="3.5" stroke="#7f98a0" stroke-width="2.3" stroke-dasharray="0.8 0.7"/><circle cx="959" cy="338" r="7.6" stroke="#9aa95c" stroke-width="2.0" stroke-dasharray="1.98 1.52"/><circle cx="959" cy="338" r="4.2" stroke="#9aa95c" stroke-width="0.9"/><circle cx="959" cy="338" r="2.3" stroke="#7f98a0" stroke-width="1.5" stroke-dasharray="0.8 0.7"/><circle cx="880" cy="338" r="6" stroke="#9aa95c" stroke-width="1.6" stroke-dasharray="1.56 1.20"/><circle cx="880" cy="338" r="3.3" stroke="#9aa95c" stroke-width="0.9"/><circle cx="880" cy="338" r="1.8" stroke="#7f98a0" stroke-width="1.2" stroke-dasharray="0.8 0.7"/></g>
<g filter="url(#b1)">
<path d="M906.6 308Q903 274 925.6 272.6Q947 274 943.6 308Q940 296 925.6 296Q911 296 906.6 308Z" fill="#8d6546"/>
<path d="M896 338Q900 320 916 316L936 316Q958 320 964.6 338Z" fill="#f1f1f2"/>
<path d="M919 308H932.4V318L925.7 324L919 318Z" fill="#d2a48e"/>
<ellipse cx="925.7" cy="300" rx="12.8" ry="15.2" fill="#dab29c"/>
<path d="M908.6 300Q907 279 925.6 278Q944 279 942.6 300Q939 287 929 286Q916 286 908.6 300Z" fill="#94694a"/>
<ellipse cx="917.6" cy="304.6" rx="3" ry="2.2" fill="#d4907e" fill-opacity="0.6"/><ellipse cx="933.8" cy="304.6" rx="3" ry="2.2" fill="#d4907e" fill-opacity="0.6"/>
</g>
<g filter="url(#b0)">
<path d="M915.6 294.4Q918.6 293.2 921.8 294.4M929.6 294.4Q932.8 293.2 935.8 294.4" stroke="#6e5040" stroke-width="0.9" fill="none"/>
<ellipse cx="918.8" cy="297.6" rx="2.2" ry="1.1" fill="#3c2e2a"/><ellipse cx="932.6" cy="297.6" rx="2.2" ry="1.1" fill="#3c2e2a"/>
<path d="M925.7 299V305.4" stroke="#c4937e" stroke-width="1.2"/>
<path d="M922.4 309.6Q925.7 311.2 929 309.6Q925.7 308.6 922.4 309.6Z" fill="#b8505a" stroke="#b8505a" stroke-width="0.8"/>
</g>
<rect x="865.6" y="324" width="79.4" height="12.6" rx="2" fill="#3a3a3c" fill-opacity="0.8"/>
</g>
</svg>
<div class="a zl" style="font-size:8.1px;left:867.4px;top:324.5px">Олена Чеботарьова</div>
<!-- label 4 -->
<div class="a" style="left:864.6px;top:388.8px;width:32px;height:12.2px;background:#26292d;border-radius:3px"></div>
<div class="a zl" style="left:879.4px;top:389px">Vira</div>
<!-- video 4 -->
<svg class="a" style="left:862px;top:402px" width="119" height="68" viewBox="862 402 119 68">
<defs><clipPath id="v4c"><path d="M862.6 402.8H980V465.6Q980 469 976.6 469H866Q862.6 469 862.6 465.6Z"/></clipPath>
<linearGradient id="ceil" x1="0" y1="0" x2="0" y2="1"><stop offset="0" stop-color="#6f6f70"/><stop offset="1" stop-color="#9a9a9a"/></linearGradient></defs>
<g clip-path="url(#v4c)">
<rect x="862" y="402" width="119" height="68" fill="#8e8e8f"/>
<rect x="862" y="402" width="86" height="26" fill="url(#ceil)"/>
<rect x="864" y="428" width="52" height="42" fill="#c9cdd0"/><rect x="862" y="427" width="56" height="1.6" fill="#5e5e60"/><rect x="862" y="428" width="2.4" height="42" fill="#6a6a6c"/>
<path d="M946.6 402H981V452H952L946.6 440Z" fill="#c4873a"/><path d="M952 428H963V452H952Z" fill="#8a5a28"/><path d="M946.6 402L958 402L952 430L946.6 440Z" fill="#a06a2c"/><rect x="963" y="412" width="1" height="40" fill="#8a5a28"/>
<rect x="958.8" y="437.4" width="22.2" height="16" fill="#d9d2b2"/><rect x="966" y="434.6" width="15" height="3.2" fill="#5c8a58"/>
<path d="M954 452H981V470H958Z" fill="#c8a49a"/>
<g filter="url(#b1)">
<path d="M912 470Q910 430 920 418Q932 410 944 418Q956 434 954 470Z" fill="#54403a"/>
<ellipse cx="929.4" cy="436" rx="12.2" ry="15" fill="#dfb8aa"/>
<path d="M916.6 432Q918 415 932 415Q946 418 945 436Q941 424 930 423Q921 424 916.6 432Z" fill="#5a443c"/>

<path d="M920 451Q926 446 933 449Q939 446 941 449Q940 457 932 457L926 461Q920 457 920 451Z" fill="#d9ad9e"/>
<path d="M896 470Q902 464 914 466L946 466Q958 466 962 470Z" fill="#e8eef2"/>
</g>
<g filter="url(#b0)">
<path d="M920.4 428.4Q923.4 427.2 926.6 428.4M933.6 428.4Q936.8 427.2 939.8 428.4" stroke="#5a4036" stroke-width="0.9" fill="none"/>
<ellipse cx="923.6" cy="431.6" rx="2.2" ry="1.1" fill="#35282a"/><ellipse cx="936.6" cy="431.6" rx="2.2" ry="1.1" fill="#35282a"/>
<path d="M930 433V439.6" stroke="#c99a8a" stroke-width="1.2"/>
<path d="M926.4 444.4Q929.6 446 933 444.4Q929.6 443.2 926.4 444.4Z" fill="#b4545c" stroke="#b4545c" stroke-width="0.8"/>
</g>
<rect x="865.6" y="455.8" width="78.6" height="12.4" rx="2" fill="#2c2c30" fill-opacity="0.82"/>
</g>
</svg>
<div class="a zl" style="font-size:8.1px;left:879.4px;top:456.2px">Наталія Білецька</div>
<!-- muted mic icons -->
<svg class="a" style="left:862px;top:188px" width="22" height="284" viewBox="862 188 22 284" fill="none" stroke="#ee4a4a" stroke-width="1.2" stroke-linecap="round">
<g id="mic"><rect x="868.6" y="192.6" width="3.2" height="5.8" rx="1.6" fill="#ee4a4a" stroke="none"/><path d="M867 197Q867.4 200.4 870.2 200.4Q873 200.4 873.4 197M870.2 200.6V202.2M866.6 202.2L874 192.6"/></g>
<use href="#mic" y="65.8"/><use href="#mic" y="197.6"/><use href="#mic" y="264.6"/>
</svg>

</body>
</html>
